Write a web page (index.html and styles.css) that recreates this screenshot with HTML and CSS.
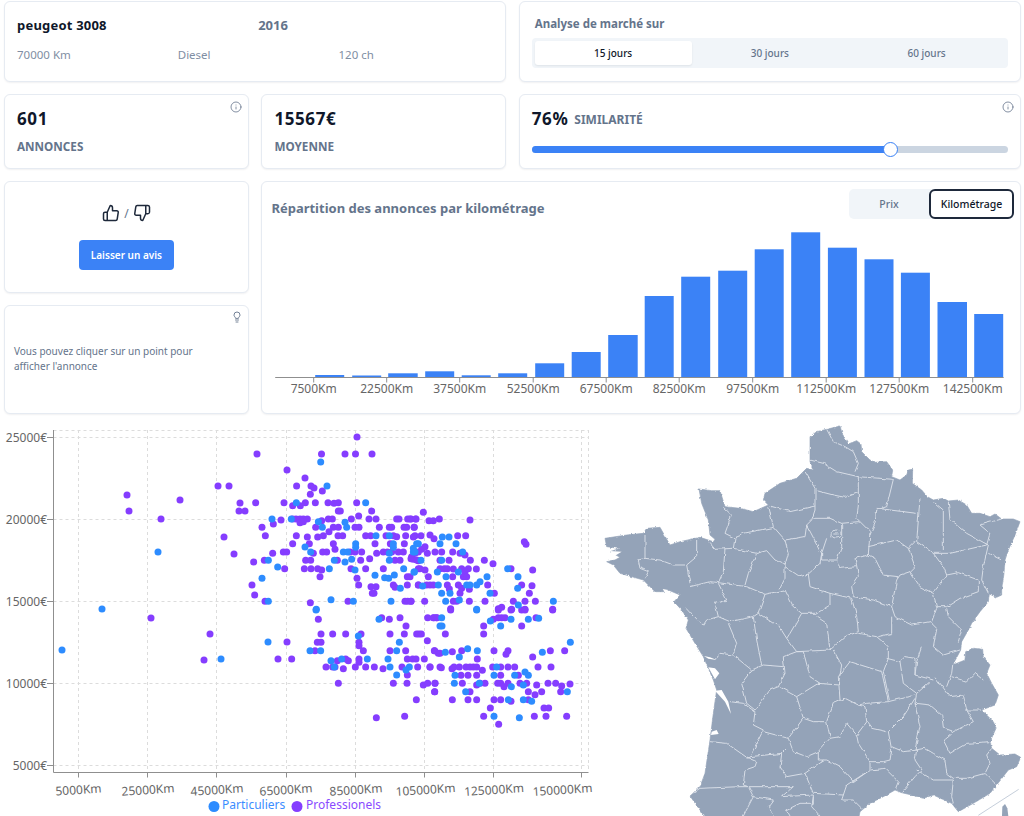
FILE: index.html
```html
<!DOCTYPE html>
<html lang="fr">
<head>
<meta charset="utf-8">
<title>Analyse de marché</title>
<link rel="stylesheet" href="styles.css">
</head>
<body>
<main class="dashboard">
  <section class="card vehicle">
    <div class="vehicle-head"><span class="vehicle-name">peugeot 3008</span><span class="vehicle-year">2016</span></div>
    <div class="vehicle-specs"><span>70000 Km</span><span>Diesel</span><span>120 ch</span></div>
  </section>

  <section class="card market">
    <h2 class="market-title">Analyse de marché sur</h2>
    <div class="segments">
      <button class="segment active">15 jours</button>
      <button class="segment">30 jours</button>
      <button class="segment">60 jours</button>
    </div>
  </section>

  <section class="card stat">
    <svg class="corner-icon" viewBox="0 0 24 24"><circle cx="12" cy="12" r="10"/><path d="M12 16v-4M12 8h.01"/></svg>
    <div class="stat-value">601</div>
    <div class="stat-label">ANNONCES</div>
  </section>

  <section class="card stat">
    <div class="stat-value">15567€</div>
    <div class="stat-label">MOYENNE</div>
  </section>

  <section class="card similarity">
    <svg class="corner-icon" viewBox="0 0 24 24"><circle cx="12" cy="12" r="10"/><path d="M12 16v-4M12 8h.01"/></svg>
    <div class="similarity-head"><span class="stat-value">76%</span><span class="similarity-label">SIMILARITÉ</span></div>
    <div class="slider"><div class="slider-fill"><span class="slider-thumb"></span></div></div>
  </section>

  <section class="card feedback">
    <div class="thumbs">
      <svg class="thumb" viewBox="0 0 24 24"><path d="M14 9V5a3 3 0 0 0-3-3l-4 9v11h11.28a2 2 0 0 0 2-1.7l1.38-9a2 2 0 0 0-2-2.3zM7 22H4a2 2 0 0 1-2-2v-7a2 2 0 0 1 2-2h3"/></svg>
      <span class="thumb-sep">/</span>
      <svg class="thumb" viewBox="0 0 24 24"><path d="M10 15v4a3 3 0 0 0 3 3l4-9V2H5.72a2 2 0 0 0-2 1.7l-1.38 9a2 2 0 0 0 2 2.3zm7-13h2.67A2.31 2.31 0 0 1 22 4v7a2.31 2.31 0 0 1-2.33 2H17"/></svg>
    </div>
    <button class="review-btn">Laisser un avis</button>
  </section>

  <section class="card histogram">
    <div class="histogram-head">
      <h2 class="histogram-title">Répartition des annonces par kilométrage</h2>
      <div class="toggle">
        <button class="toggle-btn">Prix</button>
        <button class="toggle-btn active">Kilométrage</button>
      </div>
    </div>
    <svg class="histogram-chart" viewBox="261.8 225 757 188">
      <g class="bars">
        <rect x="315" y="375" width="29" height="2"/><rect x="352" y="375.5" width="29" height="1.5"/><rect x="388" y="373.3" width="29.5" height="3.7"/><rect x="425" y="371.3" width="29" height="5.7"/><rect x="461.5" y="375.3" width="29" height="1.7"/><rect x="498" y="373.3" width="29" height="3.7"/><rect x="535" y="363.3" width="29" height="13.7"/><rect x="571.5" y="352" width="29" height="25"/><rect x="608" y="335" width="29.5" height="42"/><rect x="644.5" y="296" width="29" height="81"/><rect x="681" y="276.7" width="29" height="100.3"/><rect x="718" y="270.7" width="29" height="106.3"/><rect x="754.5" y="249.3" width="29" height="127.7"/><rect x="791" y="232.3" width="29" height="144.7"/><rect x="827.7" y="247.7" width="29" height="129.3"/><rect x="864.3" y="259.3" width="29" height="117.7"/><rect x="900.7" y="272.7" width="29" height="104.3"/><rect x="937.3" y="302" width="29.5" height="75"/><rect x="974" y="314" width="29" height="63"/>
      </g>
      <path class="axis" d="M275 377.5H1003.5M313.5 377.5v5M386.5 377.5v5M459.5 377.5v5M533 377.5v5M606 377.5v5M679 377.5v5M752.5 377.5v5M826 377.5v5M899 377.5v5M972.5 377.5v5"/>
      <g class="tick-text middle">
        <text x="313.5" y="392.5">7500Km</text><text x="386.5" y="392.5">22500Km</text><text x="459.5" y="392.5">37500Km</text><text x="533" y="392.5">52500Km</text><text x="606" y="392.5">67500Km</text><text x="679" y="392.5">82500Km</text><text x="752.5" y="392.5">97500Km</text><text x="826" y="392.5">112500Km</text><text x="899" y="392.5">127500Km</text><text x="972.5" y="392.5">142500Km</text>
      </g>
    </svg>
  </section>

  <section class="card tip">
    <svg class="corner-icon bulb" viewBox="0 0 24 24"><path d="M15 14c.2-1 .7-1.7 1.5-2.5 1-.9 1.5-2.2 1.5-3.5A6 6 0 0 0 6 8c0 1 .2 2.2 1.5 3.5.7.7 1.3 1.5 1.5 2.5zM9 18h6M10 22h4"/></svg>
    <p class="tip-text">Vous pouvez cliquer sur un point pour afficher l'annonce</p>
  </section>
</main>

<div class="bottom">
  <svg class="scatter" viewBox="0 420 600 396">
    <path class="grid-line" d="M53.5 430.5H588.5M53.5 437.5H588.5M53.5 519.5H588.5M53.5 601.5H588.5M53.5 683.5H588.5M53.5 765.5H588.5M78.5 430V772M147.5 430V772M216.5 430V772M286.5 430V772M355.5 430V772M424.5 430V772M493.5 430V772M581.5 430V772M588.5 430V772"/>
    <path class="axis" d="M53.5 430V772.5H588.5M47 437.5h6.5M47 519.5h6.5M47 601.5h6.5M47 683.5h6.5M47 765.5h6.5M78.5 772.5v5M147.5 772.5v5M216.5 772.5v5M286.5 772.5v5M355.5 772.5v5M424.5 772.5v5M493.5 772.5v5M581.5 772.5v5"/>
    <g class="tick-text end">
      <text x="47" y="442">25000€</text><text x="47" y="524">20000€</text><text x="47" y="606">15000€</text><text x="47" y="688">10000€</text><text x="47" y="770">5000€</text>
    </g>
    <g class="tick-text middle">
      <text x="78.5" y="794" transform="rotate(-4 78.5 790)">5000Km</text>
      <text x="148" y="794" transform="rotate(-4 148 790)">25000Km</text>
      <text x="217" y="794" transform="rotate(-4 217 790)">45000Km</text>
      <text x="286" y="794" transform="rotate(-4 286 790)">65000Km</text>
      <text x="356" y="794" transform="rotate(-4 356 790)">85000Km</text>
      <text x="425.5" y="794" transform="rotate(-4 425.5 790)">105000Km</text>
      <text x="494" y="794" transform="rotate(-4 494 790)">125000Km</text>
      <text x="562.5" y="794" transform="rotate(-4 562.5 790)">150000Km</text>
    </g>
    <g id="points"></g>
    <circle class="pt-blue" cx="214" cy="806.5" r="5.5"/>
    <text class="legend-blue" x="222" y="809">Particuliers</text>
    <circle class="pt-purple" cx="297" cy="806.5" r="5.5"/>
    <text class="legend-purple" x="306" y="809">Professionels</text>
  </svg>

  <svg class="map" viewBox="0 0 1272 1188">
    <defs>
      <filter id="rough" filterUnits="userSpaceOnUse" x="-50" y="-50" width="1400" height="1300">
        <feTurbulence type="fractalNoise" baseFrequency="0.05" numOctaves="2" seed="4"/>
        <feDisplacementMap in="SourceGraphic" scale="10" xChannelSelector="R" yChannelSelector="G"/>
      </filter>
      <filter id="coast" filterUnits="userSpaceOnUse" x="-50" y="-50" width="1400" height="1300">
        <feTurbulence type="fractalNoise" baseFrequency="0.1" numOctaves="2" seed="9"/>
        <feDisplacementMap in="SourceGraphic" scale="8" xChannelSelector="R" yChannelSelector="G"/>
      </filter>
      <clipPath id="mainland"><path d="M630 50L650 35 680 28 720 18 727 42 745 72 770 62 783 72 785 95 810 120 825 127 860 125 878 150 875 170 900 180 920 165 925 150 938 148 937 190 965 210 982 230 1000 240 1030 235 1045 243 1075 240 1100 255 1115 280 1140 280 1170 290 1185 282 1205 297 1240 297 1260 305 1245 345 1225 390 1215 420 1212 460 1205 510 1205 525 1190 532 1168 522 1165 545 1140 575 1115 610 1105 630 1085 665 1082 690 1065 722 1058 735 1095 720 1097 695 1120 685 1148 688 1150 710 1170 735 1160 760 1175 790 1195 825 1185 855 1145 870 1180 905 1188 925 1170 965 1175 985 1200 1005 1245 1002 1262 1012 1250 1040 1225 1050 1190 1095 1170 1120 1120 1150 1075 1175 1055 1150 1000 1125 970 1135 935 1125 905 1118 885 1110 850 1130 810 1150 780 1175 775 1200 320 1200 300 1170 270 1128 300 1100 315 1060 330 960 340 880 350 810 340 780 325 745 310 710 285 670 258 625 265 600 245 570 222 545 240 525 205 510 190 515 165 515 130 480 60 460 40 435 20 425 45 420 60 412 30 395 60 385 20 380 15 355 80 345 130 340 140 325 180 322 210 375 240 365 300 352 340 365 345 358 330 345 325 300 305 250 297 207 335 212 360 212 375 260 420 265 460 275 505 255 490 240 495 220 540 190 590 175 620 145 640 150 630 125Z"/></clipPath>
    </defs>
    <path class="land" filter="url(#coast)" d="M630 50L650 35 680 28 720 18 727 42 745 72 770 62 783 72 785 95 810 120 825 127 860 125 878 150 875 170 900 180 920 165 925 150 938 148 937 190 965 210 982 230 1000 240 1030 235 1045 243 1075 240 1100 255 1115 280 1140 280 1170 290 1185 282 1205 297 1240 297 1260 305 1245 345 1225 390 1215 420 1212 460 1205 510 1205 525 1190 532 1168 522 1165 545 1140 575 1115 610 1105 630 1085 665 1082 690 1065 722 1058 735 1095 720 1097 695 1120 685 1148 688 1150 710 1170 735 1160 760 1175 790 1195 825 1185 855 1145 870 1180 905 1188 925 1170 965 1175 985 1200 1005 1245 1002 1262 1012 1250 1040 1225 1050 1190 1095 1170 1120 1120 1150 1075 1175 1055 1150 1000 1125 970 1135 935 1125 905 1118 885 1110 850 1130 810 1150 780 1175 775 1200 320 1200 300 1170 270 1128 300 1100 315 1060 330 960 340 880 350 810 340 780 325 745 310 710 285 670 258 625 265 600 245 570 222 545 240 525 205 510 190 515 165 515 130 480 60 460 40 435 20 425 45 420 60 412 30 395 60 385 20 380 15 355 80 345 130 340 140 325 180 322 210 375 240 365 300 352 340 365 345 358 330 345 325 300 305 250 297 207 335 212 360 212 375 260 420 265 460 275 505 255 490 240 495 220 540 190 590 175 620 145 640 150 630 125Z"/>
    <g clip-path="url(#mainland)">
      <path class="depts" filter="url(#rough)" d="M680 28L700 65 735 80 760 95 775 130 765 155M630 120L670 130 710 155 775 170 880 178M615 155L645 205 645 270 635 300 620 315M650 212L700 225 735 232 775 218M775 170L775 260 770 295 810 335 805 405M880 178L860 260 830 270 825 310 810 345M505 255L520 320 555 360 565 400 555 435M510 258L570 275 645 258M640 295L690 295 725 310 775 305M620 315L665 400 660 430 625 462 600 470 555 440M555 360L615 350 620 315M725 310L725 380 710 420 720 445 770 440 765 415 805 405M680 355L665 400 665 420 710 420M370 262L395 285 375 340 405 355 400 385M405 350L430 340 520 322M290 360L290 410 260 435 270 490M135 345L135 415 115 420 120 445 145 455 135 475M135 415L180 420 220 435 255 435M330 370L345 388 400 385 470 400M375 385L370 455 355 488M270 500L330 485 355 488 440 500 495 523 555 510M470 400L500 392 525 420 555 435 555 475 540 505M470 400L445 460 435 495M355 490L380 540 345 550 355 590 320 600 310 615 290 600 258 565M355 590L390 605 460 590 475 580 495 523M555 510L580 560 605 580 570 640 560 655 590 695M475 580L520 610 535 615 560 655M625 462L630 500 690 520 755 535M690 520L690 555 650 580 605 580M650 590L680 610 690 690M590 695L690 690 735 650 775 635 770 590 755 535M775 640L830 650 865 680 865 715 850 755M770 440L775 470 755 500 760 530 820 540 875 560 890 480 900 465 930 455M805 405L825 415 850 465 895 470M805 380L890 360 925 385 945 365M925 385L945 440 930 455 960 500 1000 520 1010 560M950 365L1000 400 1030 440 1040 465 1000 515M1000 400L1050 400 1160 375M960 235L950 365M830 265L950 280M1000 245L1030 270 1030 390M1045 245L1050 300 1100 340 1165 375M1165 375L1150 440 1145 480 1165 520M1160 375L1170 340 1140 315 1205 297M1040 465L1075 458 1135 480 1135 515 1080 535 1040 560 1010 560M1165 400L1205 420M875 560L885 590 935 615 990 605 1010 625 1000 680M875 590L875 640 835 650M1040 565L1045 590 1085 630 1075 665M1010 565L995 605M1000 680L1030 705 1080 690M965 680L950 725 945 765 1000 780M860 715L900 725 915 710 945 715 945 765M900 725L910 790 950 820 990 785M1005 770L1050 830 1090 825 1100 870 1120 905 1060 935 1030 960 1050 1000M1058 735L1055 760 1040 800M1055 770L1100 785 1125 760 1150 780M1095 870L1145 870M950 820L945 850 960 920 945 990 975 985 1000 1000 1035 1020M945 850L990 855 1025 885 1030 925 1060 935M1050 1000L1100 970 1170 965M1035 1020L1040 1060 1060 1075 1100 1075 1155 1060 1190 1095M1155 1060L1170 1030 1160 1005 1175 985M950 1050L1000 1080 1060 1080 1055 1130 1060 1150M950 990L945 1020 965 1050 945 1070 905 1118M875 980L910 995 950 990M945 835L910 890 865 935 875 990 870 1020 850 1025 810 1025 775 970 770 945 740 910 720 950 690 955 655 995M770 945L800 905 815 925 860 935M800 905L795 860 775 855 735 835 700 850 680 905 690 950M720 840L715 770 750 725 845 755 865 845 800 850 775 855M865 845L945 825M850 755L868 840M700 690L725 735 715 795 655 790 590 830 535 800 555 760 550 710 590 695 610 695M610 695L630 770 660 790M550 740L490 735 455 750 400 705 360 700 345 715M385 610L410 670 400 705M460 590L470 660 485 735M455 750L425 790 440 850 465 870 510 810 535 800M390 845L430 850 465 875 460 915 490 930 450 1010 440 1015M490 935L565 955 610 895 590 830M610 895L640 905 680 905M565 955L580 995 620 1010 655 995 655 1020 680 1020 720 1040 760 1085 810 1050 810 1025M330 965L380 970 440 1012 470 1025 465 1040 435 1050 430 1095 445 1100 580 1100 545 1130M450 1010L545 1000 560 985M540 1040L560 1070 615 1060 640 1120 730 1125M545 1000L540 1045M615 1060L670 1020M730 1125L740 1095 810 1050 855 1045 895 1085 885 1110M270 1125L300 1105 420 1100 445 1100M445 1100L460 1130 430 1188M460 1130L520 1140 505 1160 520 1188M545 1130L640 1125 640 1150 600 1150 560 1170 570 1188M640 1130L635 1160 660 1188M730 1125L725 1140 760 1140 785 1165M693 342a15 12 0 1 0 30 0a15 12 0 1 0-30 0M700 342h16"/>
    </g>
    <path class="water" d="M345 812L365 810 385 845 393 882 375 845ZM335 935L350 930 356 942 333 945ZM312 708L330 712 350 720 325 716ZM325 742L345 745 358 760 345 778ZM30 393L65 395 40 410ZM188 507L205 510 195 518Z"/>
    <path class="corsica-line" d="M1135 1186L1256 1108"/>
    <path class="corsica" d="M1206 1188L1207 1160 1215 1152 1222 1165 1225 1188Z"/>
  </svg>
</div>
<script src="script.js"></script>
</body>
</html>
```

FILE: styles.css
```css
* { box-sizing: border-box; }
html, body { margin: 0; padding: 0; }
body {
  width: 1024px;
  height: 816px;
  overflow: hidden;
  background: #fff;
  color: #0f172a;
  font-family: "Noto Sans", "Open Sans", sans-serif;
}
button { font-family: inherit; border: 0; background: none; padding: 0; }
h2, p { margin: 0; }

.dashboard {
  display: grid;
  grid-template-columns: repeat(4, 1fr);
  grid-template-rows: 81px 75px 112px 109px;
  gap: 12px 12.5px;
  padding: 1px 3px 0 4px;
}
.card {
  position: relative;
  background: #fff;
  border: 1px solid #e6ebf2;
  border-radius: 6px;
  box-shadow: 0 1px 2px rgba(15, 23, 42, 0.06);
}

.vehicle { grid-column: span 2; padding: 14px 6px 0 12px; }
.vehicle-head { display: grid; grid-template-columns: 1fr 1fr; font-size: 13px; font-weight: 700; line-height: 18px; }
.vehicle-name { letter-spacing: 0.2px; }
.vehicle-year { color: #64748b; }
.vehicle-specs { display: grid; grid-template-columns: repeat(3, 1fr); margin-top: 12px; font-size: 11.5px; line-height: 18px; color: #7f8ea3; }

.market { grid-column: span 2; padding: 13px 12px 0; }
.market-title { margin-left: 3px; font-size: 11.5px; font-weight: 700; line-height: 17px; color: #64748b; }
.segments { display: flex; margin-top: 6px; height: 30px; padding: 3px; background: #f1f5f9; border-radius: 4px; }
.segment { flex: 1; font-size: 10px; font-weight: 500; color: #64748b; border-radius: 3px; }
.segment.active { color: #0f172a; background: #fff; box-shadow: 0 1px 2px rgba(15, 23, 42, 0.08); }

.stat { padding: 12px 12px 0; }
.stat-value { font-size: 17px; font-weight: 700; line-height: 24px; letter-spacing: 0.6px; color: #0f172a; }
.stat-label { margin-top: 7px; font-size: 11.7px; font-weight: 700; line-height: 16px; color: #64748b; }
.corner-icon {
  position: absolute;
  top: 6px;
  right: 6px;
  width: 12px;
  height: 12px;
  fill: none;
  stroke: #64748b;
  stroke-width: 1.6;
  stroke-linecap: round;
  stroke-linejoin: round;
}

.similarity { grid-column: span 2; padding: 12px 12px 0; }
.similarity-head { display: flex; align-items: center; gap: 6px; }
.similarity-label { font-size: 12px; font-weight: 700; color: #64748b; }
.slider { height: 7px; margin-top: 15px; background: #cbd5e1; border-radius: 4px; }
.slider-fill { position: relative; width: 75.4%; height: 100%; background: #3b82f6; border-radius: 4px 0 0 4px; }
.slider-thumb {
  position: absolute;
  top: -4px;
  right: -7.5px;
  width: 15px;
  height: 15px;
  background: #fff;
  border: 1.5px solid #3b82f6;
  border-radius: 50%;
}

.feedback { display: flex; flex-direction: column; align-items: center; padding-top: 21px; }
.thumbs { display: flex; align-items: center; gap: 4px; height: 20px; }
.thumb { width: 18px; height: 18px; fill: none; stroke: #1e293b; stroke-width: 2; stroke-linecap: round; stroke-linejoin: round; }
.thumb-sep { font-size: 12px; color: #64748b; }
.review-btn { margin-top: 17px; width: 95px; height: 30px; background: #3b82f6; border-radius: 4px; color: #fff; font-size: 10px; font-weight: 600; }

.histogram { grid-column: 2 / 5; grid-row: 3 / 5; padding: 7px 6px 0 9px; }
.histogram-head { display: flex; align-items: center; justify-content: space-between; height: 30px; margin-bottom: 6px; }
.histogram-title { font-size: 13px; font-weight: 700; line-height: 30px; padding-top: 7px; color: #64748b; }
.toggle { display: flex; width: 165px; height: 30px; background: #f1f5f9; border-radius: 5px; }
.toggle-btn { flex: 0 0 80px; font-size: 10.5px; font-weight: 500; color: #64748b; }
.toggle-btn.active { flex: 0 0 85px; color: #0f172a; background: #fff; border: 2px solid #1e293b; border-radius: 6px; }
.histogram-chart { display: block; width: 757px; height: 188px; margin-left: -9px; }
.bars rect { fill: #3b82f6; }

.tip { grid-column: 1; grid-row: 4; display: flex; align-items: center; padding: 0 9px; }
.bulb { top: 5px; right: 5px; stroke-width: 1.8; }
.tip-text { max-width: 190px; font-size: 10px; line-height: 15px; color: #64748b; margin-top: -2px; }

.bottom { display: flex; margin-top: 6px; }
.scatter { display: block; width: 600px; height: 396px; flex: none; }
.map { display: block; width: 424px; height: 396px; flex: none; }

.axis { fill: none; stroke: #8f8f8f; stroke-width: 1; }
.grid-line { fill: none; stroke: #dcdcdc; stroke-width: 1; stroke-dasharray: 3 3; }
.tick-text text { font-size: 12px; fill: #666; }
.tick-text.middle { text-anchor: middle; }
.tick-text.end { text-anchor: end; }
.pt-blue { fill: #2d8cff; }
.pt-purple { fill: #853dff; }
.legend-blue { font-size: 12px; fill: #3c8dff; }
.legend-purple { font-size: 12px; fill: #8a4bff; }

.land { fill: #94a3b8; stroke: #94a3b8; stroke-width: 2; stroke-linejoin: round; }
.depts { fill: none; stroke: #dbe1ea; stroke-width: 2.8; stroke-linejoin: round; }
.water { fill: #fff; }
.corsica-line { stroke: #b9c4d3; stroke-width: 2.5; fill: none; }
.corsica { fill: #94a3b8; }
```

FILE: script.js
```js
// Scatter data, grouped by area of the plot: [offsetX, offsetY, scaleX, scaleY, purple, blue]
var SETS = [
  [250, 490, 3, 3,
    [17,38,102,38,128,47,151,47,166,38,196,38,234,38,252,40,265,38,320,38,181,13,217,3,265,63,271,63,365,63,326,78,304,87,93,90,128,87,138,87,150,87,160,87,172,87,150,98,160,95,215,92,235,87,247,87,357,87,378,87,440,87,447,87,473,87,483,87,497,87,70,102,36,112,197,112,250,112,265,112,315,112,327,112,388,112,418,112,425,112,462,112,470,112,492,112,237,125,46,137,139,137,203,141,220,137,264,137,278,137,347,137,362,137,408,137,430,137,440,140,467,137,495,137,172,141,128,161,178,161,250,161,375,161,421,161,463,161,255,178,68,190,100,186,110,186,190,190,218,186,230,186,300,186,315,186,335,186,380,190,400,186,412,186,425,186,445,186,460,186,485,200,495,190,11,216,43,211,167,211,182,211,262,211,332,211,359,206,435,211,450,211,490,208,505,212,104,236,163,236,183,236,203,236,215,240,303,236,347,236,400,236,505,236,210,260,321,265,472,260,6,285,326,285,363,290,378,290,430,285,435,292,472,285,505,285,14,315,367,310,372,310,45,334,181,338,294,334,465,334,473,334,483,334],
    [139,38,347,38,66,87,124,87,205,95,217,112,285,97,290,112,378,137,418,137,430,161,317,161,317,172,165,171,182,186,280,186,293,186,430,172,418,190,490,186,505,161,55,211,253,211,285,216,305,208,418,211,83,231,238,236,315,240,461,236,492,246,36,265,375,256,404,263,416,265,433,255,451,295,55,334,243,329,310,334,423,334,199,358]],
  [410, 490, 3, 3,
    [40,67,0,87,18,87,57,92,70,92,88,87,180,90,13,112,10,141,33,137,60,135,72,146,143,137,167,137,343,155,348,163,45,170,35,178,25,186,52,190,75,186,95,186,128,186,150,190,165,195,3,206,20,210,181,211,223,211,249,221,117,211,90,211,30,236,45,240,90,236,103,236,112,236,130,237,155,236,175,236,165,245,199,237,303,236,368,240,55,260,128,260,160,260,170,260,0,260,25,285,50,285,60,285,70,285,112,285,118,297,145,285,155,295,150,310,178,298,233,285,253,310,335,285,366,287,358,310,3,334,44,334,130,334,140,334,178,334,225,334,310,334,345,334,376,334,122,356,265,356,275,352,305,358,345,358,428,358],
    [97,141,117,141,20,161,90,161,138,161,10,175,15,186,158,186,33,211,95,211,13,246,82,246,145,246,293,236,108,260,231,260,324,260,38,288,85,285,170,285,180,285,200,285,210,275,95,310,120,310,240,310,323,295,107,334,148,330,430,334,325,345,200,358]],
  [290, 610, 3, 3,
    [85,28,275,23,298,28,330,23,413,23,432,23,440,23,348,48,93,72,128,72,167,72,213,72,300,72,343,72,380,72,387,72,394,72,412,92,82,97,93,97,207,97,207,107,220,122,75,122,300,122,347,122,433,122,445,130,5,147,142,152,167,147,175,152,207,147,207,157,352,147,368,147,378,147,403,147,108,171,128,171,135,171,160,176,196,171,227,171,253,171,279,176,336,171,383,171,420,171,450,171,352,195,145,220,310,220,351,220,400,225,413,220,435,220,434,245,379,269,259,323,344,319],
    [78,0,267,28,205,78,60,122,92,122,328,97,320,122,123,152,155,147,232,147,294,147,133,171,300,171,358,171,348,180,320,195,450,48]],
  [430, 610, 3, 3,
    [62,0,10,23,20,23,190,28,205,23,215,23,225,23,243,0,275,0,205,0,285,0,368,0,318,23,161,48,275,48,46,72,161,72,14,122,30,130,67,125,95,122,192,122,234,122,228,133,404,122,361,122,308,141,142,147,0,171,34,173,66,176,72,171,88,171,108,171,120,171,130,171,140,171,157,181,188,171,212,171,234,171,254,171,324,171,363,171,93,196,114,196,140,196,212,196,265,196,15,220,97,220,140,225,150,220,165,220,203,220,212,220,222,230,234,220,270,220,290,220,320,225,354,220,377,220,395,228,420,222,14,245,120,245,295,245,315,254,335,245,392,245,67,269,114,269,140,269,192,269,212,269,243,274,295,269,181,294,342,294,356,294,161,319,313,319,348,319,410,319,206,343],
    [35,23,181,33,36,48,212,48,243,28,295,28,326,25,140,0,421,97,46,127,113,116,142,122,88,141,337,127,200,171,75,196,192,196,254,196,285,186,295,196,73,220,148,220,244,230,280,225,107,245,412,245,235,269,280,269,305,274,192,319,268,323]],
  [0, 0, 1, 1,
    [257,454,321.5,454,345,454,355.5,454,372,454,357,437,287,470,305,478,296.6,486,311,486,314,488,218,486,229,486,127,495,129,511,161,519,180,500,239,511,245,511,240,503,224,537,234,554,151,618,210,634,204,660,287,642,278,659],
    [320.7,462,327,486,158,552,102,609,62,650,221,659,268,642]]
];

var NS = "http://www.w3.org/2000/svg";
var layer = document.getElementById("points");

function plot(values, set, cls) {
  for (var i = 0; i < values.length; i += 2) {
    var c = document.createElementNS(NS, "circle");
    c.setAttribute("class", cls);
    c.setAttribute("cx", set[0] + values[i] / set[2]);
    c.setAttribute("cy", set[1] + values[i + 1] / set[3]);
    c.setAttribute("r", 3.5);
    layer.appendChild(c);
  }
}

SETS.forEach(function (set) { plot(set[4], set, "pt-purple"); });
SETS.forEach(function (set) { plot(set[5], set, "pt-blue"); });
```
